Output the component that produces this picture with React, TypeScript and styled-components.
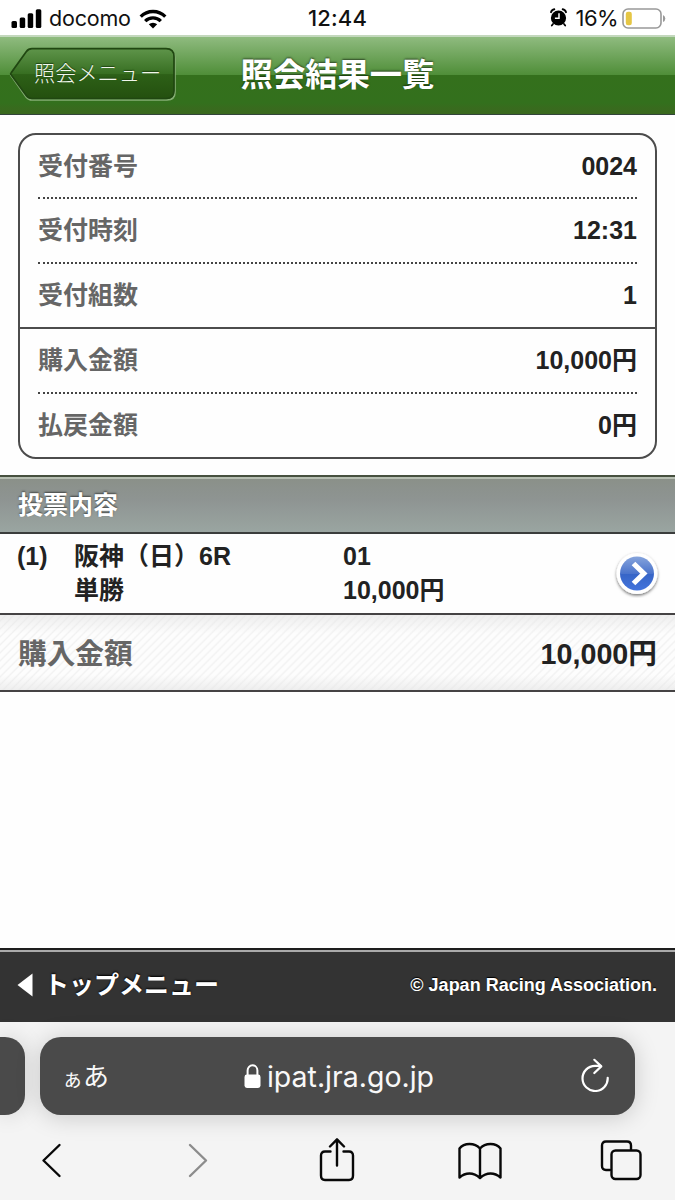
import React from 'react';
import styled, { createGlobalStyle } from 'styled-components';

const GlobalStyle = createGlobalStyle`
  * { box-sizing: border-box; }
  body { margin: 0; background: #fff; }
`;

const siteFont = `"Liberation Sans", "Noto Sans CJK JP", sans-serif`;
const systemFont = `Inter, "Noto Sans CJK JP", sans-serif`;

const Screen = styled.div`
  width: 675px;
  height: 1200px;
  display: flex;
  flex-direction: column;
  overflow: hidden;
  background: #fefefe;
  font-family: ${siteFont};
  color: #222;
`;

const StatusBar = styled.div`
  height: 35px;
  flex: none;
  display: grid;
  grid-template-columns: 1fr auto 1fr;
  align-items: center;
  padding: 2px 9px 0 11px;
  background: #fff;
  color: #111;
  font-family: ${systemFont};
  font-size: 22px;
  line-height: 33px;
`;

const StatusGroup = styled.div<{ $end?: boolean }>`
  display: flex;
  align-items: center;
  justify-content: ${(p) => (p.$end ? 'flex-end' : 'flex-start')};
`;

const Carrier = styled.span`
  margin: 0 8px 0 7px;
  font-size: 21.5px;
  letter-spacing: -0.2px;
`;

const Clock = styled.span`
  margin-right: 2px;
  font-weight: 500;
  font-size: 22px;
  letter-spacing: 0.2px;
`;

const Percent = styled.span`
  margin: 0 4px 0 9px;
  font-size: 22px;
  letter-spacing: -0.6px;
`;

const Header = styled.header`
  height: 80px;
  flex: none;
  display: grid;
  grid-template-columns: 175px 1fr 175px;
  align-items: center;
  border-top: 2px solid #c3d8bd;
  border-bottom: 1px solid #33443a;
  background: linear-gradient(#8fbb7f 0, #4f8e38 38px, #34701c 38px, #33701d 66px, #386b1e 71px, #3a691e 100%);
`;

const BackButton = styled.div`
  position: relative;
  display: flex;
  align-items: center;
  height: 54px;
  margin: 0 0 3px 9px;
  padding: 0 0 4px 25px;
  color: #f1f6ec;
  font-family: "Noto Sans CJK JP", sans-serif;
  font-size: 21.2px;
  font-weight: 300;
  line-height: 50px;
  white-space: nowrap;
  text-shadow: 0 -1px 1px #1d4310;
`;

const ButtonShape = styled.svg`
  position: absolute;
  left: 0;
  top: 0;
`;

const ButtonText = styled.span`
  position: relative;
`;

const Title = styled.h1`
  margin: 0;
  padding-bottom: 1px;
  color: #fff;
  font-size: 32.3px;
  line-height: 48px;
  text-align: center;
  white-space: nowrap;
  text-shadow: 0 -1px 2px rgba(0, 0, 0, 0.55);
`;

const Card = styled.section`
  flex: none;
  height: 326px;
  margin: 18px 18px 0;
  border: 2px solid #4c4c4c;
  border-radius: 18px;
`;

const CardGroup = styled.div<{ $divided?: boolean }>`
  padding: 0 18px;
  border-top: ${(p) => (p.$divided ? '2px solid #4c4c4c' : '0')};
`;

const CardRow = styled.div<{ $last?: boolean; $height: number }>`
  height: ${(p) => p.$height}px;
  display: flex;
  align-items: center;
  justify-content: space-between;
  font-size: 25px;
  font-weight: 700;
  line-height: 36px;
  padding-bottom: ${(p) => (p.$last ? 2 : 1)}px;
  border-bottom: ${(p) => (p.$last ? '0' : '2px dotted #444')};
`;

const Label = styled.span`
  color: #666;
`;

const SectionBar = styled.h2`
  flex: none;
  height: 59px;
  margin: 16px 0 0;
  padding: 0 18px;
  border-top: 2px solid #46503f;
  border-bottom: 2px solid #3b3d3c;
  box-shadow: inset 0 2px 0 #b6beb2;
  background: linear-gradient(#8a9088, #8e9492 40%, #9aa5a1);
  color: #fff;
  font-size: 25px;
  line-height: 56px;
  text-shadow: 0 -1px 2px rgba(0, 0, 0, 0.55);
`;

const BetRow = styled.div`
  flex: none;
  height: 81px;
  display: grid;
  grid-template-columns: 57px 269px 1fr auto;
  align-items: start;
  padding: 5px 14px 0 17px;
  border-bottom: 2px solid #454344;
  font-size: 25px;
  font-weight: 700;
  line-height: 34px;
`;

const BetIcon = styled.svg`
  margin-top: 9px;
`;

const TotalRow = styled.div`
  flex: none;
  height: 77px;
  display: flex;
  align-items: center;
  justify-content: space-between;
  padding: 2px 18px 0;
  border-bottom: 2px solid #454344;
  background:
    linear-gradient(rgba(228, 228, 228, 0.6), rgba(255, 255, 255, 0) 25%, rgba(255, 255, 255, 0) 80%, rgba(228, 228, 228, 0.6)),
    repeating-linear-gradient(135deg, #fdfdfd 0, #fdfdfd 2.8px, #f2f2f2 4.2px, #fdfdfd 5.65px);
  font-size: 28.7px;
  font-weight: 700;
  line-height: 44px;
`;

const Blank = styled.div`
  flex: 1;
`;

const Footer = styled.footer`
  flex: none;
  height: 74px;
  display: flex;
  align-items: center;
  justify-content: space-between;
  padding: 0 18px 2px 17px;
  border-top: 2px solid #1d1d1d;
  box-shadow: inset 0 2px 0 #aaa;
  background: #333;
  color: #fff;
  font-weight: 700;
`;

const TopMenu = styled.div`
  display: flex;
  align-items: center;
  gap: 11px;
  font-size: 25px;
  line-height: 38px;
  text-shadow: 0 -1px 2px #000;
`;

const Copyright = styled.small`
  font-size: 18px;
  line-height: 24px;
  text-shadow: 0 -1px 1px #000;
`;

const Browser = styled.div`
  flex: none;
  height: 178px;
  background: #f4f4f4;
  font-family: ${systemFont};
`;

const AddressRow = styled.div`
  display: flex;
  gap: 15px;
  height: 93px;
  padding-top: 15px;
`;

const TabEdge = styled.div`
  width: 25px;
  height: 78px;
  background: #4a4a4a;
  border-radius: 0 20px 20px 0;
  box-shadow: 0 0 22px rgba(0, 0, 0, 0.15);
`;

const AddressBar = styled.div`
  width: 595px;
  height: 78px;
  display: grid;
  grid-template-columns: 1fr auto 1fr;
  align-items: center;
  padding: 0 26px 0 22px;
  background: #4a4a4a;
  border-radius: 21px;
  box-shadow: 0 2px 24px rgba(0, 0, 0, 0.18);
  color: #f8f8f8;
`;

const ReaderButton = styled.span`
  font-family: "Noto Sans CJK JP", sans-serif;
  font-size: 26px;
  line-height: 36px;

  small {
    font-size: 21px;
  }
`;

const Address = styled.span`
  display: flex;
  align-items: center;
  gap: 6px;
  margin-left: 7px;
  padding-top: 1px;
  font-size: 28.5px;
  line-height: 38px;
`;

const ReloadIcon = styled.svg`
  justify-self: end;
  margin-bottom: 3px;
`;

const Toolbar = styled.nav`
  height: 85px;
  display: grid;
  grid-template-columns: 146px 134px 139px 143px 1fr;
  align-items: start;
  padding: 23px 0 0 38px;
`;

const ToolIcon = styled.svg`
  fill: none;
  stroke: #080808;
  stroke-width: 2.4;
  stroke-linecap: round;
  stroke-linejoin: round;
`;

const purchase: [string, string][] = [
  ['受付番号', '0024'],
  ['受付時刻', '12:31'],
  ['受付組数', '1'],
];

const amounts: [string, string][] = [
  ['購入金額', '10,000円'],
  ['払戻金額', '0円'],
];

export default function App() {
  return (
    <Screen>
      <GlobalStyle />
      <StatusBar>
        <StatusGroup>
          <svg width="31" height="20" viewBox="0 0 31 20" fill="#000">
            <rect x="0.5" y="12" width="5.5" height="7" rx="1.5" />
            <rect x="8.7" y="8.5" width="5.5" height="10.5" rx="1.5" />
            <rect x="16.7" y="4.2" width="5.5" height="14.8" rx="1.5" />
            <rect x="24.8" y="0.2" width="5.5" height="18.8" rx="1.5" />
          </svg>
          <Carrier>docomo</Carrier>
          <svg width="28" height="20" viewBox="0 0 28 20">
            <g fill="none" stroke="#000" strokeWidth="3.3">
              <path d="M1.7 7.6 A17.4 17.4 0 0 1 26.3 7.6" />
              <path d="M6.2 12.1 A11 11 0 0 1 21.8 12.1" />
            </g>
            <path d="M9.8 15.3 A6.2 6.2 0 0 1 18.2 15.3 L14 19.4 Z" fill="#000" />
          </svg>
        </StatusGroup>
        <Clock>12:44</Clock>
        <StatusGroup $end>
          <svg width="17" height="21" viewBox="0 0 17 21">
            <circle cx="8.5" cy="10" r="7.6" fill="#000" />
            <g fill="none" stroke="#000" strokeLinecap="round">
              <path d="M1 4.2 Q1.7 1.7 4.3 1.3 M12.7 1.3 Q15.3 1.7 16 4.2" strokeWidth="1.9" />
              <path d="M3 16 1.8 17.5 M14 16 15.2 17.5" strokeWidth="1.8" />
            </g>
            <path d="M9 5.3 V10.3 H4.9" fill="none" stroke="#fff" strokeWidth="1.5" />
          </svg>
          <Percent>16%</Percent>
          <svg width="44" height="21" viewBox="0 0 44 21">
            <rect x="1" y="1" width="38" height="19" rx="5" fill="#fff" stroke="#999" strokeWidth="1.6" />
            <rect x="3.8" y="3.8" width="6" height="13.5" rx="2.2" fill="#e5c645" />
            <path d="M41 7 Q43.3 8 43.3 10.5 T41 14 Z" fill="#999" />
          </svg>
        </StatusGroup>
      </StatusBar>

      <Header>
        <BackButton>
          <ButtonShape width="167" height="55" viewBox="0 0 167 55">
            <defs>
              <linearGradient id="backFill" x2="0" y2="1">
                <stop offset="0" stopColor="#5e944a" />
                <stop offset="0.5" stopColor="#386f22" />
                <stop offset="0.52" stopColor="#2d6017" />
                <stop offset="1" stopColor="#24500f" />
              </linearGradient>
            </defs>
            <path
              d="M23 3 H158 Q166 3 166 11 V45 Q166 53 158 53 H23 Q19.5 53 17.2 50.2 L2.3 29 Q1 28 2.3 27 L17.2 6 Q19.5 3 23 3 Z"
              fill="none"
              stroke="#86ad75"
              strokeWidth="1.6"
            />
            <path
              d="M23 1.7 H157 Q165 1.7 165 9.7 V43.5 Q165 51.5 157 51.5 H23 Q19.5 51.5 17.2 48.5 L2.3 28 Q1 26.8 2.3 25.6 L17.2 4.7 Q19.5 1.7 23 1.7 Z"
              fill="url(#backFill)"
              stroke="#204711"
              strokeWidth="1.7"
            />
          </ButtonShape>
          <ButtonText>照会メニュー</ButtonText>
        </BackButton>
        <Title>照会結果一覧</Title>
      </Header>

      <Card>
        <CardGroup>
          {purchase.map(([label, value], i) => (
            <CardRow key={label} $last={i === 2} $height={i === 0 ? 64 : i === 1 ? 65 : 63}>
              <Label>{label}</Label>
              <span>{value}</span>
            </CardRow>
          ))}
        </CardGroup>
        <CardGroup $divided>
          {amounts.map(([label, value], i) => (
            <CardRow key={label} $last={i === 1} $height={i === 0 ? 65 : 63}>
              <Label>{label}</Label>
              <span>{value}</span>
            </CardRow>
          ))}
        </CardGroup>
      </Card>

      <SectionBar>投票内容</SectionBar>
      <BetRow>
        <span>(1)</span>
        <span>
          阪神（日）6R
          <br />
          単勝
        </span>
        <span>
          01
          <br />
          10,000円
        </span>
        <BetIcon width="48" height="50" viewBox="0 0 48 50">
          <defs>
            <linearGradient id="blueDisc" x2="0" y2="1">
              <stop offset="0" stopColor="#86a4dc" />
              <stop offset="0.5" stopColor="#4b74cc" />
              <stop offset="0.52" stopColor="#3765c7" />
              <stop offset="1" stopColor="#4374dc" />
            </linearGradient>
            <filter id="discShadow" x="-20%" y="-20%" width="140%" height="150%">
              <feDropShadow dx="0" dy="1.5" stdDeviation="1.6" floodOpacity="0.55" />
            </filter>
          </defs>
          <circle cx="24" cy="25.5" r="20.5" fill="#fff" filter="url(#discShadow)" />
          <circle cx="24" cy="25.5" r="17" fill="url(#blueDisc)" />
          <path d="M20.5 15.5 30.8 25.5 20.5 35.5" fill="none" stroke="#fff" strokeWidth="5.2" />
        </BetIcon>
      </BetRow>
      <TotalRow>
        <Label>購入金額</Label>
        <span>10,000円</span>
      </TotalRow>

      <Blank />

      <Footer>
        <TopMenu>
          <svg width="16" height="24" viewBox="0 0 16 24">
            <path d="M0.5 12 15.5 0.5 V23.5 Z" fill="#fff" />
          </svg>
          <span>トップメニュー</span>
        </TopMenu>
        <Copyright>© Japan Racing Association.</Copyright>
      </Footer>

      <Browser>
        <AddressRow>
          <TabEdge />
          <AddressBar>
            <ReaderButton>
              <small>ぁ</small>あ
            </ReaderButton>
            <Address>
              <svg width="17" height="25" viewBox="0 0 17 25">
                <rect x="0.5" y="10.5" width="16" height="13.5" rx="2.4" fill="#fff" />
                <path d="M3.6 11 V6.5 A4.9 5.2 0 0 1 13.4 6.5 V11" fill="none" stroke="#fff" strokeWidth="2" />
              </svg>
              <span>ipat.jra.go.jp</span>
            </Address>
            <ReloadIcon width="28" height="34" viewBox="0 0 28 34" fill="none" stroke="#fff" strokeWidth="2.2" strokeLinecap="round" strokeLinejoin="round">
              <path d="M26.7 19.8 A12.6 12.6 0 1 1 14 7.8 H19.5" />
              <path d="M13.3 1.8 20.3 8.4 13.3 15" />
            </ReloadIcon>
          </AddressBar>
        </AddressRow>
        <Toolbar>
          <ToolIcon width="28" height="44" viewBox="0 0 28 44">
            <path d="M21.5 7 5.5 22.5 21.5 38" />
          </ToolIcon>
          <ToolIcon width="28" height="44" viewBox="0 0 28 44">
            <path d="M6 7 22 22.5 6 38" stroke="#8c8c8c" />
          </ToolIcon>
          <ToolIcon width="38" height="44" viewBox="0 0 38 44">
            <path d="M12.5 13.5 H7 Q3 13.5 3 17.5 V37.5 Q3 42 7 42 H31 Q35 42 35 37.5 V17.5 Q35 13.5 31 13.5 H25.5" />
            <path d="M19 27.5 V1.5 M12 8.5 19 1.3 26 8.5" />
          </ToolIcon>
          <ToolIcon width="46" height="44" viewBox="0 0 46 44">
            <path d="M23 10.5 Q19 6 12.5 6 T2.5 10.5 V39.5 Q7 35.5 12.5 35.5 T23 40 Q28 35.5 33.5 35.5 T43.5 39.5 V10.5 Q40 6 33.5 6 T23 10.5 V39.5" />
          </ToolIcon>
          <ToolIcon width="42" height="44" viewBox="0 0 42 44">
            <path d="M10 32 H6 Q2 32 2 28 V7.5 Q2 3.5 6 3.5 H27 Q31 3.5 31 7.5 V11.5" />
            <rect x="11.5" y="12.5" width="29" height="28.5" rx="4" />
          </ToolIcon>
        </Toolbar>
      </Browser>
    </Screen>
  );
}
